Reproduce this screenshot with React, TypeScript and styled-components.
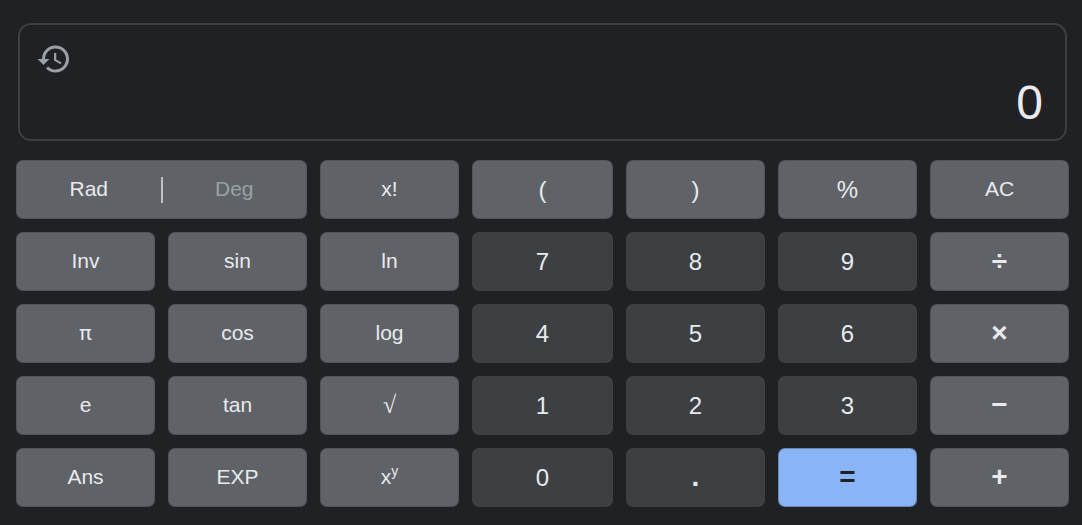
import React from "react";
import styled, { createGlobalStyle, css } from "styled-components";

const GlobalStyle = createGlobalStyle`
  * { box-sizing: border-box; }
  body {
    margin: 0;
    background: #202124;
    color: #e8eaed;
    font-family: "Liberation Sans", Arial, sans-serif;
  }
`;

const Calculator = styled.main`
  padding: 23px 13px 18px 16px;
`;

const Display = styled.section`
  display: flex;
  flex-direction: column;
  justify-content: space-between;
  height: 118px;
  margin: 0 2px 19px;
  padding: 16px 22px 10px 16px;
  border: 2px solid #3c4043;
  border-radius: 13px;
`;

const HistoryButton = styled.button`
  align-self: flex-start;
  display: flex;
  padding: 0;
  border: 0;
  background: none;
  color: #9aa0a6;
  cursor: pointer;

  svg {
    width: 36px;
    height: 36px;
    fill: currentColor;
  }
`;

const Result = styled.output`
  align-self: flex-end;
  font-size: 48px;
  line-height: 52px;
`;

const Keypad = styled.div`
  display: grid;
  grid-template-columns: repeat(3, minmax(0, 139fr)) minmax(0, 141fr) repeat(3, minmax(0, 139fr));
  grid-auto-rows: 59px;
  gap: 13px;
`;

type Tone = "function" | "digit" | "equals";
type Size = "label" | "greek" | "radical" | "number" | "operator";

const tones = {
  function: css`background: #5f6368; color: #e8eaed;`,
  digit: css`background: #3c4043; color: #e8eaed;`,
  equals: css`background: #8ab4f8; color: #202124;`,
};

const sizes = {
  label: css`font-size: 21px; padding: 0 0 2px;`,
  greek: css`font-family: Roboto, sans-serif; font-size: 21px; padding: 0 0 2px;`,
  radical: css`font-family: "Liberation Serif", serif; font-size: 24px; padding: 0 0 2px;`,
  number: css`font-size: 24px; padding: 0;`,
  operator: css`font-size: 28px; font-weight: bold; padding: 0 0 2px;`,
};

const Key = styled.button<{ $tone: Tone; $size: Size }>`
  border: 1px solid rgba(60, 64, 67, 0.4);
  border-radius: 7px;
  font-family: inherit;
  line-height: 28px;
  cursor: pointer;
  ${({ $size }) => sizes[$size]}
  ${({ $tone }) => tones[$tone]}

  sup {
    font-size: 14px;
    line-height: 0;
  }
`;

const AngleMode = styled.div`
  grid-column: span 2;
  display: flex;
  align-items: center;
  border: 1px solid rgba(60, 64, 67, 0.4);
  border-radius: 7px;
  background: #5f6368;
`;

const ModeButton = styled.button<{ $active?: boolean }>`
  flex: 1;
  padding: 0 0 2px;
  border: 0;
  background: none;
  color: ${({ $active }) => ($active ? "#e8eaed" : "#9aa0a6")};
  font-family: inherit;
  font-size: 21px;
  line-height: 28px;
  cursor: pointer;
`;

const Divider = styled.span`
  width: 2px;
  height: 26px;
  background: #bdc1c6;
`;

interface KeyDef {
  label: React.ReactNode;
  name: string;
  tone: Tone;
  size: Size;
}

const fn = (label: React.ReactNode, name: string, size: Size = "label"): KeyDef => ({ label, name, tone: "function", size });
const num = (label: string): KeyDef => ({ label, name: label, tone: "digit", size: "number" });

const keys: KeyDef[] = [
  fn("x!", "factorial"),
  fn("(", "left parenthesis", "number"),
  fn(")", "right parenthesis", "number"),
  fn("%", "percentage", "number"),
  fn("AC", "all clear"),

  fn("Inv", "inverse"),
  fn("sin", "sine"),
  fn("ln", "natural logarithm"),
  num("7"),
  num("8"),
  num("9"),
  fn("÷", "divide", "operator"),

  fn("π", "pi", "greek"),
  fn("cos", "cosine"),
  fn("log", "logarithm"),
  num("4"),
  num("5"),
  num("6"),
  fn("×", "multiply", "operator"),

  fn("e", "euler's number"),
  fn("tan", "tangent"),
  fn("√", "square root", "radical"),
  num("1"),
  num("2"),
  num("3"),
  fn("−", "minus", "operator"),

  fn("Ans", "answer"),
  fn("EXP", "exponential"),
  fn(<>x<sup>y</sup></>, "X to the power of Y"),
  num("0"),
  { label: ".", name: "point", tone: "digit", size: "operator" },
  { label: "=", name: "equals", tone: "equals", size: "operator" },
  fn("+", "plus", "operator"),
];

export default function App() {
  return (
    <>
      <GlobalStyle />
      <Calculator>
        <Display>
          <HistoryButton type="button" aria-label="History">
            <svg viewBox="0 0 24 24" aria-hidden="true">
              <path d="M13 3a9 9 0 0 0-9 9H1l3.89 3.89.07.14L9 12H6c0-3.87 3.13-7 7-7s7 3.13 7 7-3.13 7-7 7c-1.93 0-3.68-.79-4.94-2.06l-1.42 1.42A8.954 8.954 0 0 0 13 21a9 9 0 0 0 0-18zm-1 5v5l4.28 2.54.72-1.21-3.5-2.08V8H12z" />
            </svg>
          </HistoryButton>
          <Result>0</Result>
        </Display>
        <Keypad>
          <AngleMode role="group" aria-label="Angle unit">
            <ModeButton type="button" $active aria-pressed="true">Rad</ModeButton>
            <Divider />
            <ModeButton type="button" aria-pressed="false">Deg</ModeButton>
          </AngleMode>
          {keys.map((key) => (
            <Key key={key.name} type="button" aria-label={key.name} $tone={key.tone} $size={key.size}>
              {key.label}
            </Key>
          ))}
        </Keypad>
      </Calculator>
    </>
  );
}
